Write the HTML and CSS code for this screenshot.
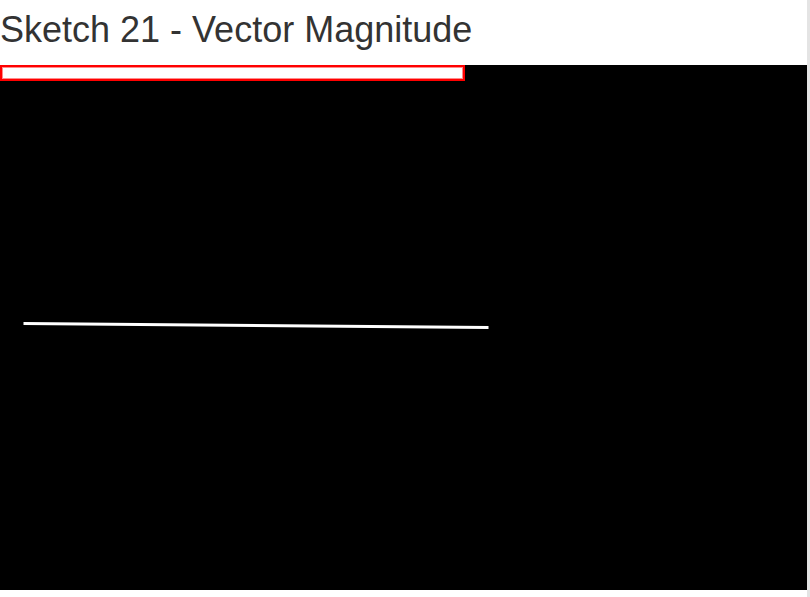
FILE: index.html
```html
<!DOCTYPE html>
<html>
<head>
<meta charset="utf-8">
<title>Sketch 21 - Vector Magnitude</title>
<link rel="stylesheet" href="styles.css">
</head>
<body>
<div class="page">
  <main class="main">
    <h1 class="title">Sketch 21 - Vector Magnitude</h1>
    <div class="canvas">
      <div class="magbar"></div>
      <svg class="plot" width="807" height="525" viewBox="0 0 807 525">
        <line x1="23.5" y1="258.5" x2="488.5" y2="262.5" stroke="#ffffff" stroke-width="3"/>
      </svg>
    </div>
  </main>
  <div class="scrollbar"></div>
</div>
</body>
</html>
```
FILE: styles.css
```css
html, body {
  margin: 0;
  padding: 0;
  background: #ffffff;
}
.page {
  display: flex;
  width: 810px;
  height: 597px;
  overflow: hidden;
}
.main {
  width: 807px;
  flex: none;
}
.title {
  margin: 10px 0 15px;
  font-family: "Helvetica Neue", "Liberation Sans", Arial, sans-serif;
  font-size: 36px;
  font-weight: 500;
  line-height: 1.1;
  color: #333333;
  height: 40px;
}
.canvas {
  position: relative;
  width: 807px;
  height: 525px;
  background: #000000;
}
.magbar {
  position: absolute;
  left: 0;
  top: 0;
  width: 461px;
  height: 12px;
  background: #ffffff;
  border: 2px solid #ff0000;
  box-shadow: inset 0 0 0 1px #ff8a8a;
}
.plot {
  display: block;
}
.scrollbar {
  flex: none;
  width: 3px;
  background: #e4e4e4;
}
```
